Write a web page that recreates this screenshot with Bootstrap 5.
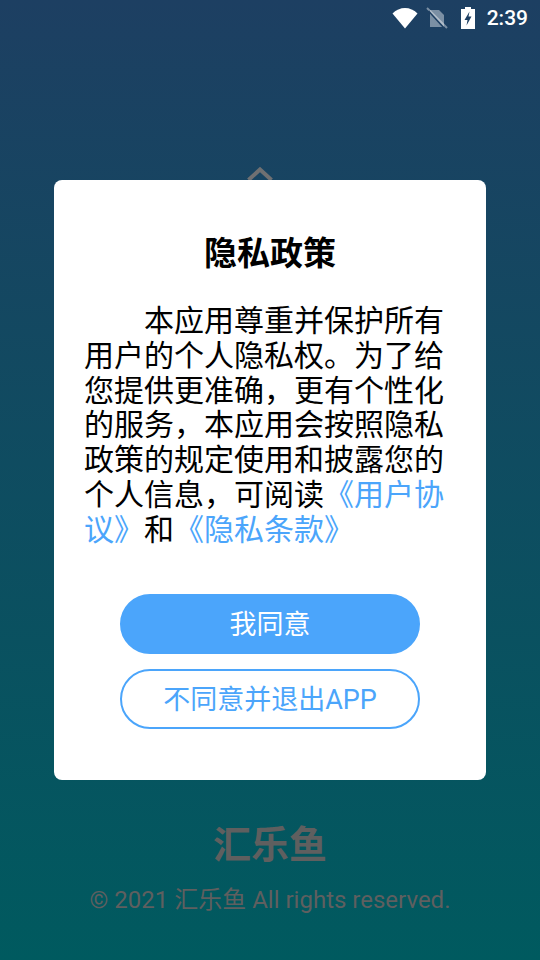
<!DOCTYPE html>
<html lang="zh">
<head>
<meta charset="utf-8">
<title>隐私政策</title>
<link href="https://cdn.jsdelivr.net/npm/bootstrap@5.3.0/dist/css/bootstrap.min.css" rel="stylesheet">
<style>
html,body{width:540px;height:960px;margin:0;overflow:hidden}
body{font-family:Roboto,"Noto Sans CJK SC",sans-serif}
.screen{width:540px;height:960px;background:linear-gradient(180deg,#1d3f62 0%,#005a5f 100%);position:relative}
.status-row{position:absolute;top:0;left:0;right:0;height:36px;padding-right:12px;color:#fff}
.clock{font-size:21px;font-weight:500;line-height:36px;margin-left:12px}
.batt-icon{margin-left:13px}
.logo-peek{position:absolute;left:246px;top:166px}
.dialog{position:absolute;left:54px;top:180px;width:432px;height:600px;background:#fff;border-radius:8px;padding:0 41px 0 30px}
.dialog-title{font-size:33px;font-weight:700;line-height:44px;margin:52px 0 0;text-align:center;color:#000;width:372px}
.dialog-body{font-size:30px;line-height:34.8px;color:#000;text-indent:2em;margin:28px 0 0;width:361px}
.dialog-body a{color:#4ba5fb;text-decoration:none}
.btn-stack{position:absolute;left:66px;top:414px;width:300px}
.pill{width:300px;height:60px;border-radius:30px;font-size:27px;line-height:1;padding:2px 0 0;border:2px solid #4ba5fb}
.pill-fill{background:#4ba5fb;color:#fff}
.pill-line{background:#fff;color:#4ba5fb;margin-top:15px}
.brand-foot{position:absolute;left:0;right:0;top:820px;text-align:center;color:#5f5f5f}
.brand-name{font-size:38px;font-weight:700;line-height:50px}
.brand-copy{font-size:24px;line-height:30px;margin-top:15px}
</style>
</head>
<body>
<div class="screen">
  <div class="status-row d-flex align-items-center justify-content-end">
    <svg width="26" height="22" viewBox="0 0 26 22"><path d="M13 21.500 0.500 6.500Q6 1 13 1T25.500 6.500Z" fill="#fff"/></svg>
    <svg class="ms-2" width="22" height="22" viewBox="0 0 22 22"><path d="M4 3h9l5 5v12H4Z" fill="#fff" fill-opacity=".42"/><path d="M1 1 21 21" stroke="#fff" stroke-opacity=".42" stroke-width="2"/><path d="M2.500 4 18 21" stroke="#1d3f62" stroke-width="1.500"/></svg>
    <svg class="batt-icon" width="14" height="22" viewBox="0 0 14 22"><path d="M4 0h6v2h4v20H0V2h4Z" fill="#fff"/><path d="M8.500 4.500 3.500 13h3l-1 5.500 5-9h-3Z" fill="#1d3f62"/></svg>
    <span class="clock">2:39</span>
  </div>
  <svg class="logo-peek" width="28" height="14" viewBox="0 0 28 14"><path d="M2.500 14 14 3.500 25.500 14" fill="none" stroke="#6f7072" stroke-width="4"/></svg>
  <div class="dialog">
    <h1 class="dialog-title">隐私政策</h1>
    <p class="dialog-body">本应用尊重并保护所有用户的个人隐私权。为了给您提供更准确，更有个性化的服务，本应用会按照隐私政策的规定使用和披露您的个人信息，可阅读<a href="#">《用户协议》</a>和<a href="#">《隐私条款》</a></p>
    <div class="btn-stack d-flex flex-column">
      <button type="button" class="btn pill pill-fill">我同意</button>
      <button type="button" class="btn pill pill-line">不同意并退出APP</button>
    </div>
  </div>
  <div class="brand-foot">
    <div class="brand-name">汇乐鱼</div>
    <div class="brand-copy">© 2021 汇乐鱼 All rights reserved.</div>
  </div>
</div>
<script src="https://cdn.jsdelivr.net/npm/bootstrap@5.3.0/dist/js/bootstrap.bundle.min.js"></script>
</body>
</html>
